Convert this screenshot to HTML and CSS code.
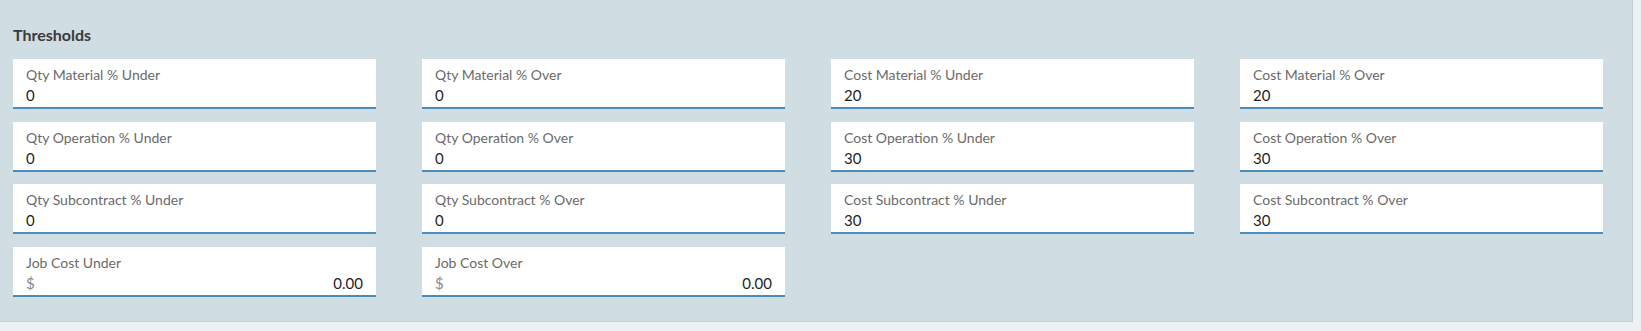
FILE: index.html
```html
<!DOCTYPE html>
<html lang="en">
<head>
    <meta charset="UTF-8">
    <meta name="viewport" content="width=device-width, initial-scale=1.0">
    <title>Thresholds</title>
    <link rel="stylesheet" href="styles.css">
</head>
<body>

    <div class="panel">
        <h2 class="panel-title">Thresholds</h2>
        <div class="field-grid">
            <div class="field"><label>Qty Material % Under</label><div class="value">0</div></div>
            <div class="field"><label>Qty Material % Over</label><div class="value">0</div></div>
            <div class="field"><label>Cost Material % Under</label><div class="value">20</div></div>
            <div class="field"><label>Cost Material % Over</label><div class="value">20</div></div>

            <div class="field"><label>Qty Operation % Under</label><div class="value">0</div></div>
            <div class="field"><label>Qty Operation % Over</label><div class="value">0</div></div>
            <div class="field"><label>Cost Operation % Under</label><div class="value">30</div></div>
            <div class="field"><label>Cost Operation % Over</label><div class="value">30</div></div>

            <div class="field"><label>Qty Subcontract % Under</label><div class="value">0</div></div>
            <div class="field"><label>Qty Subcontract % Over</label><div class="value">0</div></div>
            <div class="field"><label>Cost Subcontract % Under</label><div class="value">30</div></div>
            <div class="field"><label>Cost Subcontract % Over</label><div class="value">30</div></div>

            <div class="field">
                <label>Job Cost Under</label>
                <div class="value money"><span class="currency">$</span><span>0.00</span></div>
            </div>
            <div class="field">
                <label>Job Cost Over</label>
                <div class="value money"><span class="currency">$</span><span>0.00</span></div>
            </div>
        </div>
    </div>

</body>
</html>
```

FILE: styles.css
```css
body {
    font-family: Lato, "Open Sans", sans-serif;
    background-color: #edf1f3;
    color: #222;
    margin: 0;
}
.panel {
    background: #d0dde2;
    width: 1633px;
    height: 322px;
    box-sizing: border-box;
    padding: 26px 17px 0 13px;
    border-right: 1px solid #c2cfd4;
    border-bottom: 1px solid #c2cfd4;
}
.panel-title {
    margin: 0;
    font-size: 16px;
    line-height: 18px;
    font-weight: 700;
    color: #3a3a3a;
}
.field-grid {
    display: grid;
    grid-template-columns: repeat(4, 363px);
    column-gap: 46px;
    row-gap: 12.7px;
    margin-top: 15px;
}
.field {
    background: #fff;
    height: 50px;
    box-sizing: border-box;
    padding: 7px 13px 0;
    border-bottom: 2px solid #4a8cbd;
}
.field label {
    display: block;
    font-size: 14px;
    line-height: 17px;
    color: #6b6b6b;
}
.value {
    margin-top: 2px;
    font-size: 15px;
    line-height: 20px;
    color: #1f1f1f;
}
.money {
    display: flex;
    justify-content: space-between;
}
.currency {
    color: #8a8a8a;
}
```
